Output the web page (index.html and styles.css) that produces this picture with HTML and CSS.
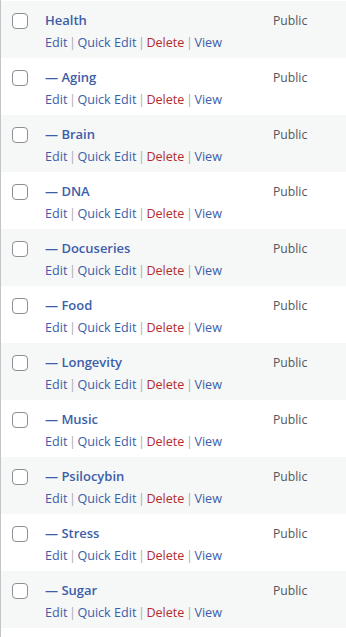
FILE: index.html
```html
<!DOCTYPE html>
<html>
<head>
<meta charset="utf-8">
<link rel="stylesheet" href="styles.css">
</head>
<body>
<div class="list">
  <div class="row alt"><span class="cb"></span><div class="main"><a class="title">Health</a><div class="actions"><a>Edit</a><span class="sep">|</span><a>Quick Edit</a><span class="sep">|</span><a class="del">Delete</a><span class="sep">|</span><a>View</a></div></div><div class="vis">Public</div></div>
  <div class="row"><span class="cb"></span><div class="main"><a class="title">— Aging</a><div class="actions"><a>Edit</a><span class="sep">|</span><a>Quick Edit</a><span class="sep">|</span><a class="del">Delete</a><span class="sep">|</span><a>View</a></div></div><div class="vis">Public</div></div>
  <div class="row alt"><span class="cb"></span><div class="main"><a class="title">— Brain</a><div class="actions"><a>Edit</a><span class="sep">|</span><a>Quick Edit</a><span class="sep">|</span><a class="del">Delete</a><span class="sep">|</span><a>View</a></div></div><div class="vis">Public</div></div>
  <div class="row"><span class="cb"></span><div class="main"><a class="title">— DNA</a><div class="actions"><a>Edit</a><span class="sep">|</span><a>Quick Edit</a><span class="sep">|</span><a class="del">Delete</a><span class="sep">|</span><a>View</a></div></div><div class="vis">Public</div></div>
  <div class="row alt"><span class="cb"></span><div class="main"><a class="title">— Docuseries</a><div class="actions"><a>Edit</a><span class="sep">|</span><a>Quick Edit</a><span class="sep">|</span><a class="del">Delete</a><span class="sep">|</span><a>View</a></div></div><div class="vis">Public</div></div>
  <div class="row"><span class="cb"></span><div class="main"><a class="title">— Food</a><div class="actions"><a>Edit</a><span class="sep">|</span><a>Quick Edit</a><span class="sep">|</span><a class="del">Delete</a><span class="sep">|</span><a>View</a></div></div><div class="vis">Public</div></div>
  <div class="row alt"><span class="cb"></span><div class="main"><a class="title">— Longevity</a><div class="actions"><a>Edit</a><span class="sep">|</span><a>Quick Edit</a><span class="sep">|</span><a class="del">Delete</a><span class="sep">|</span><a>View</a></div></div><div class="vis">Public</div></div>
  <div class="row"><span class="cb"></span><div class="main"><a class="title">— Music</a><div class="actions"><a>Edit</a><span class="sep">|</span><a>Quick Edit</a><span class="sep">|</span><a class="del">Delete</a><span class="sep">|</span><a>View</a></div></div><div class="vis">Public</div></div>
  <div class="row alt"><span class="cb"></span><div class="main"><a class="title">— Psilocybin</a><div class="actions"><a>Edit</a><span class="sep">|</span><a>Quick Edit</a><span class="sep">|</span><a class="del">Delete</a><span class="sep">|</span><a>View</a></div></div><div class="vis">Public</div></div>
  <div class="row"><span class="cb"></span><div class="main"><a class="title">— Stress</a><div class="actions"><a>Edit</a><span class="sep">|</span><a>Quick Edit</a><span class="sep">|</span><a class="del">Delete</a><span class="sep">|</span><a>View</a></div></div><div class="vis">Public</div></div>
  <div class="row alt"><span class="cb"></span><div class="main"><a class="title">— Sugar</a><div class="actions"><a>Edit</a><span class="sep">|</span><a>Quick Edit</a><span class="sep">|</span><a class="del">Delete</a><span class="sep">|</span><a>View</a></div></div><div class="vis">Public</div></div>
</div>
</body>
</html>
```
FILE: styles.css
```css
html, body {
  margin: 0;
  padding: 0;
  background: #fff;
}
body {
  font-family: "Open Sans", "Noto Sans", sans-serif;
  font-size: 13px;
  color: #50575e;
}
.list {
  border-left: 1px solid #c3c4c7;
  min-height: 637px;
  box-sizing: border-box;
  padding-top: 1px;
}
.row {
  height: 57px;
  display: flex;
  align-items: flex-start;
  box-sizing: border-box;
  padding-top: 8px;
  background: #fff;
}
.row.alt {
  background: #f6f7f7;
}
.cb {
  flex: none;
  width: 16px;
  height: 16px;
  box-sizing: border-box;
  border: 1px solid #8c8f94;
  border-radius: 4px;
  background: #fff;
  margin: 4px 0 0 11px;
}
.main {
  margin-left: 17px;
  width: 228px;
  flex: none;
}
.title {
  display: block;
  font-size: 13px;
  font-weight: 600;
  line-height: 22px;
  color: #3c5ea9;
}
.actions {
  font-size: 12.6px;
  line-height: 24px;
  white-space: nowrap;
}
.actions a {
  color: #3c5ea9;
}
.actions a.del {
  color: #b32d2e;
}
.sep {
  display: inline-block;
  width: 10px;
  text-align: center;
  color: #a7aaad;
}
.vis {
  font-size: 12.2px;
  line-height: 24px;
  color: #50575e;
}
```
